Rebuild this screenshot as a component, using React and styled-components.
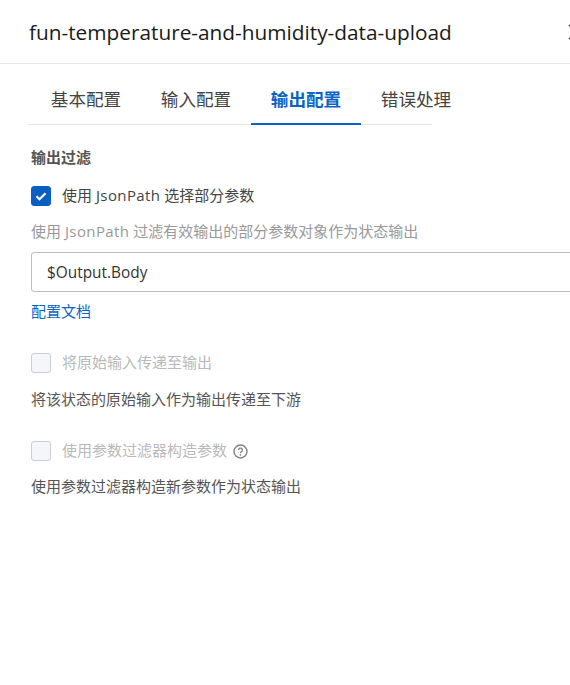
import React from "react";
import styled, { createGlobalStyle } from "styled-components";

const GlobalStyle = createGlobalStyle`
  html, body {
    margin: 0;
    padding: 0;
    background: #fff;
    overflow: hidden;
  }
  body {
    font-family: "Open Sans", "Noto Sans CJK SC", sans-serif;
  }
`;

const Panel = styled.div`
  width: 600px;
  height: 685px;
  background: #fff;
`;

const Header = styled.header`
  display: flex;
  align-items: center;
  justify-content: space-between;
  width: 600px;
  height: 64px;
  padding-left: 29px;
  padding-right: 16px;
  box-sizing: border-box;
  border-bottom: 1px solid #e6e6e6;
`;

const Title = styled.h1`
  margin: 0;
  font-size: 20.8px;
  font-weight: 400;
  color: #1a1a1a;
  white-space: nowrap;
`;

const CloseIcon = styled.svg`
  width: 16px;
  height: 16px;
  flex: none;
  stroke: #333;
  stroke-width: 1.5;
`;

const Tabs = styled.nav`
  display: flex;
  width: 401px;
  height: 60px;
  margin-left: 28px;
  padding-left: 3px;
  border-bottom: 1px solid #e3e3e3;
`;

const Tab = styled.div`
  flex: none;
  width: 110px;
  height: 61px;
  box-sizing: border-box;
  padding-top: 9px;
  display: flex;
  align-items: center;
  justify-content: center;
  font-size: 17.6px;
  font-weight: ${(p) => (p.$active ? 700 : 400)};
  color: ${(p) => (p.$active ? "#0a64c4" : "#444")};
  border-bottom: 2px solid ${(p) => (p.$active ? "#0a64c4" : "transparent")};
`;

const Content = styled.section`
  display: flex;
  flex-direction: column;
  padding: 22px 0 0 31px;
`;

const SectionTitle = styled.div`
  font-size: 15px;
  font-weight: 700;
  line-height: 20px;
  color: #555;
`;

const CheckRow = styled.div`
  display: flex;
  align-items: center;
  gap: 11px;
  height: 20px;
  margin-top: ${(p) => p.$top}px;
`;

const Box = styled.span`
  width: 20px;
  height: 20px;
  box-sizing: border-box;
  flex: none;
  display: flex;
  align-items: center;
  justify-content: center;
  border-radius: 3px;
  border: 1px solid ${(p) => (p.$checked ? "#0a5fc4" : "#c9ccd2")};
  background: ${(p) => (p.$checked ? "#0a5fc4" : "#f4f6f9")};
`;

const Label = styled.span`
  font-size: 15px;
  line-height: 20px;
  padding-bottom: 2px;
  color: ${(p) => (p.$disabled ? "#b9b9b9" : "#444")};
  white-space: nowrap;
`;

const Hint = styled.div`
  font-size: 15px;
  line-height: 20px;
  margin-top: ${(p) => p.$top}px;
  color: ${(p) => (p.$muted ? "#999" : "#555")};
  white-space: nowrap;
`;

const Latin = styled.span`
  letter-spacing: 0.4px;
`;

const Field = styled.input`
  display: block;
  width: 569px;
  height: 40px;
  box-sizing: border-box;
  margin-top: 11px;
  padding: 0 15px;
  border: 1px solid #b8bfcc;
  border-radius: 3px;
  background: #fff;
  font-family: inherit;
  font-size: 15.4px;
  color: #333;
  outline: none;
`;

const DocLink = styled.a`
  font-size: 15px;
  line-height: 20px;
  margin-top: 9px;
  color: #0a64c4;
  text-decoration: none;
  align-self: flex-start;
`;

const HelpIcon = styled.svg`
  width: 15px;
  height: 15px;
  flex: none;
  margin-left: -5px;
  margin-top: 1px;
`;

export default function App() {
  return (
    <Panel>
      <GlobalStyle />
      <Header>
        <Title>fun-temperature-and-humidity-data-upload</Title>
        <CloseIcon viewBox="0 0 16 16" fill="none">
          <path d="M1 1l14 14M15 1L1 15" />
        </CloseIcon>
      </Header>
      <Tabs>
        <Tab>基本配置</Tab>
        <Tab>输入配置</Tab>
        <Tab $active>输出配置</Tab>
        <Tab>错误处理</Tab>
      </Tabs>
      <Content>
        <SectionTitle>输出过滤</SectionTitle>
        <CheckRow $top={19}>
          <Box $checked>
            <svg width="14" height="14" viewBox="0 0 14 14" fill="none">
              <path d="M2.5 7.2l3 3 6-6" stroke="#fff" strokeWidth="2.2" />
            </svg>
          </Box>
          <Label>使用 <Latin>JsonPath</Latin> 选择部分参数</Label>
        </CheckRow>
        <Hint $muted $top={15}>使用 <Latin>JsonPath</Latin> 过滤有效输出的部分参数对象作为状态输出</Hint>
        <Field readOnly value="$Output.Body" />
        <DocLink href="#">配置文档</DocLink>
        <CheckRow $top={32}>
          <Box />
          <Label $disabled>将原始输入传递至输出</Label>
        </CheckRow>
        <Hint $top={16}>将该状态的原始输入作为输出传递至下游</Hint>
        <CheckRow $top={32}>
          <Box />
          <Label $disabled>使用参数过滤器构造参数</Label>
          <HelpIcon viewBox="0 0 15 15" fill="none">
            <circle cx="7.5" cy="7.5" r="6.5" stroke="#808080" strokeWidth="1.4" />
            <path d="M5.6 6a1.9 1.9 0 1 1 2.9 1.6c-.7.4-1 .8-1 1.6" stroke="#808080" strokeWidth="1.3" />
            <circle cx="7.5" cy="11" r=".85" fill="#808080" />
          </HelpIcon>
        </CheckRow>
        <Hint $top={15}>使用参数过滤器构造新参数作为状态输出</Hint>
      </Content>
    </Panel>
  );
}
